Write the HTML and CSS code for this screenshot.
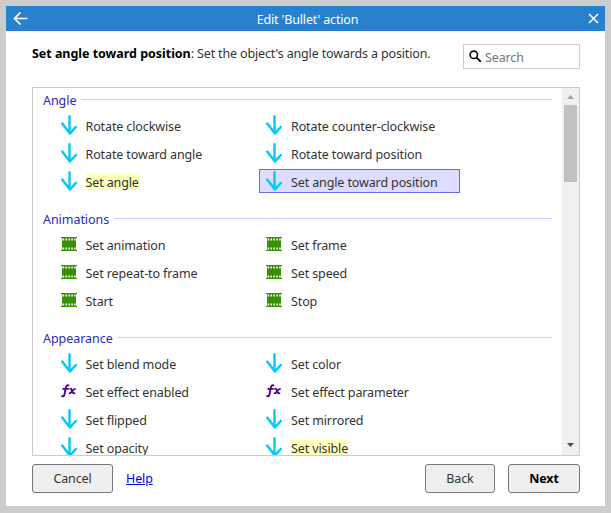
FILE: index.html
```html
<!DOCTYPE html>
<html lang="en">
<head>
<meta charset="utf-8">
<title>Edit 'Bullet' action</title>
<link rel="stylesheet" href="styles.css">
</head>
<body>
<svg class="defs" width="0" height="0" aria-hidden="true">
  <symbol id="arrow" viewBox="0 0 16 20"><path d="M8.5 1.2V18M1.2 8.6L8.9 18.6L14.8 12" fill="none" stroke="#00cbf5" stroke-width="2.4" stroke-linecap="round" stroke-linejoin="round"/></symbol>
  <symbol id="film" viewBox="0 0 16 14"><path d="M0 0H16V1H15V13H16V14H0V13H1V1H0Z" fill="#3a9005"/><path d="M1.6 2.5H15M1.6 11.5H15" stroke="#fff" stroke-width="2" stroke-dasharray="1.5 1.4"/></symbol>
  <symbol id="fx" viewBox="0 0 16 14"><path d="M7.4 1.4C6 .8 5.2 1.7 4.7 4L3.6 10C3.2 12 2.4 12.7 1.2 12.1M2.2 4.9H7" fill="none" stroke="#55008f" stroke-width="1.9" stroke-linecap="round"/><path d="M9.2 4.8C11.4 4 10.6 10.2 13.4 9.2M14 4.9C12.4 4.5 10.2 9.6 8.7 9.3" fill="none" stroke="#55008f" stroke-width="1.9" stroke-linecap="round"/></symbol>
</svg>
<div class="dialog">
  <header class="titlebar">
    <svg class="back-icon" width="16" height="14" viewBox="0 0 16 14"><path d="M14.5 6.5H2M7.5 .5L1.5 6.5L7.5 12.5" fill="none" stroke="#fff" stroke-width="1.7"/></svg>
    <h1>Edit 'Bullet' action</h1>
    <svg class="close-icon" width="11" height="11" viewBox="0 0 11 11"><path d="M1 1L10 10M10 1L1 10" stroke="#fff" stroke-width="1.5"/></svg>
  </header>
  <main>
    <div class="top">
      <p class="description"><b>Set angle toward position</b>: Set the object's angle towards a position.</p>
      <div class="search"><svg width="13" height="13" viewBox="0 0 13 13"><circle cx="4.8" cy="4.8" r="3.7" fill="none" stroke="#111" stroke-width="1.6"/><path d="M7.6 7.6L11.8 11.8" stroke="#111" stroke-width="2"/></svg><span>Search</span></div>
    </div>
    <div class="listbox">
      <div class="groups">
        <section>
          <h2>Angle</h2>
          <ul>
            <li><svg class="arrow"><use href="#arrow"/></svg><span>Rotate clockwise</span></li>
            <li><svg class="arrow"><use href="#arrow"/></svg><span>Rotate counter-clockwise</span></li>
            <li><svg class="arrow"><use href="#arrow"/></svg><span>Rotate toward angle</span></li>
            <li><svg class="arrow"><use href="#arrow"/></svg><span>Rotate toward position</span></li>
            <li><svg class="arrow"><use href="#arrow"/></svg><span class="mark">Set angle</span></li>
            <li class="selected"><svg class="arrow"><use href="#arrow"/></svg><span>Set angle toward position</span></li>
          </ul>
        </section>
        <section>
          <h2>Animations</h2>
          <ul>
            <li><svg class="film"><use href="#film"/></svg><span>Set animation</span></li>
            <li><svg class="film"><use href="#film"/></svg><span>Set frame</span></li>
            <li><svg class="film"><use href="#film"/></svg><span>Set repeat-to frame</span></li>
            <li><svg class="film"><use href="#film"/></svg><span>Set speed</span></li>
            <li><svg class="film"><use href="#film"/></svg><span>Start</span></li>
            <li><svg class="film"><use href="#film"/></svg><span>Stop</span></li>
          </ul>
        </section>
        <section>
          <h2>Appearance</h2>
          <ul>
            <li><svg class="arrow"><use href="#arrow"/></svg><span>Set blend mode</span></li>
            <li><svg class="arrow"><use href="#arrow"/></svg><span>Set color</span></li>
            <li><svg class="film"><use href="#fx"/></svg><span>Set effect enabled</span></li>
            <li><svg class="film"><use href="#fx"/></svg><span>Set effect parameter</span></li>
            <li><svg class="arrow"><use href="#arrow"/></svg><span>Set flipped</span></li>
            <li><svg class="arrow"><use href="#arrow"/></svg><span>Set mirrored</span></li>
            <li><svg class="arrow"><use href="#arrow"/></svg><span>Set opacity</span></li>
            <li><svg class="arrow"><use href="#arrow"/></svg><span class="mark">Set visible</span></li>
          </ul>
        </section>
      </div>
      <div class="scrollbar">
        <svg width="7" height="4" viewBox="0 0 7 4"><path d="M0 4L3.5 0L7 4Z" fill="#a3a3a3"/></svg>
        <div class="thumb"></div>
        <svg class="down" width="7" height="4" viewBox="0 0 7 4"><path d="M0 0L3.5 4L7 0Z" fill="#505050"/></svg>
      </div>
    </div>
    <footer>
      <button class="cancel">Cancel</button>
      <a href="#">Help</a>
      <button class="back">Back</button>
      <button class="next">Next</button>
    </footer>
  </main>
</div>
</body>
</html>
```
FILE: styles.css
```css
* { box-sizing: border-box; }
body {
  margin: 0;
  height: 513px;
  padding: 6px 6px 7px;
  background: #ccc;
  overflow: hidden;
  font: 12.5px/18px "Noto Sans", "Open Sans", sans-serif;
  letter-spacing: -0.12px;
  color: #333;
}
.defs { display: none; }
h1, h2, p, ul { margin: 0; padding: 0; font-weight: 400; }
.dialog { height: 500px; width: 599px; background: #fff; }
.titlebar {
  display: flex;
  align-items: center;
  justify-content: space-between;
  height: 25px;
  padding: 0 6px 0 7px;
  background: #2980cc;
  color: #fff;
}
.titlebar h1 { font-size: 12.5px; padding: 2px 2px 0 0; letter-spacing: -0.15px; }
main { padding: 13px 25px 0 26px; }
.top { display: flex; justify-content: space-between; height: 43px; }
.description { padding-top: 1px; white-space: nowrap; letter-spacing: -0.15px; }
.description b { color: #000; letter-spacing: -0.03px; }
.search {
  display: flex;
  align-items: center;
  gap: 3px;
  width: 117px;
  height: 25px;
  padding-left: 5px;
  border: 1px solid #ccc;
  color: #757575;
}
.search span { padding-top: 2px; }
.listbox {
  display: flex;
  justify-content: space-between;
  height: 369px;
  border: 1px solid #ccc;
  overflow: hidden;
}
.groups { width: 519px; padding-left: 10px; }
section { height: 119px; padding-top: 4px; }
h2 {
  display: flex;
  align-items: center;
  gap: 5px;
  height: 18px;
  margin-bottom: 3px;
  font-size: 12.5px;
  letter-spacing: -0.05px;
  color: #2a2aba;
}
h2::after { content: ""; flex: 1; height: 1px; margin-top: -3px; background: #ccf; }
ul {
  display: grid;
  grid-template-columns: 201px 201px;
  grid-auto-rows: 24px;
  gap: 4px;
  padding-left: 11px;
  list-style: none;
}
li { display: flex; align-items: center; padding-left: 7px; white-space: nowrap; }
li svg { flex: none; width: 16px; margin-right: 8.5px; }
li span { height: 17px; line-height: 18px; margin-top: 2px; }
li:nth-child(even) svg { margin-right: 9px; }
.arrow { height: 20px; }
.film { height: 14px; }
.mark { height: 16px; line-height: 17px; background: #ffb; }
.selected { padding-left: 6px; border: 1px solid #6a6aef; background: #ddf; }
.scrollbar {
  display: flex;
  flex-direction: column;
  align-items: center;
  width: 17px;
  padding: 7px 0 8px;
  background: #f0f0f0;
}
.thumb { width: 13px; height: 77px; margin-top: 6px; background: #c1c1c1; }
.down { margin-top: auto; }
footer { display: flex; align-items: center; padding-top: 8px; }
button {
  height: 29px;
  padding: 1px 0 0;
  border: 1px solid #767676;
  border-radius: 3px;
  background: #efefef;
  font: inherit;
  letter-spacing: -0.12px;
  color: #333;
}
.cancel { width: 81px; margin-right: 13px; }
footer a { color: #00e; padding-top: 1px; }
.back { width: 70px; margin-left: auto; margin-right: 13px; }
.next { width: 72px; font-weight: 700; color: #000; }
```
